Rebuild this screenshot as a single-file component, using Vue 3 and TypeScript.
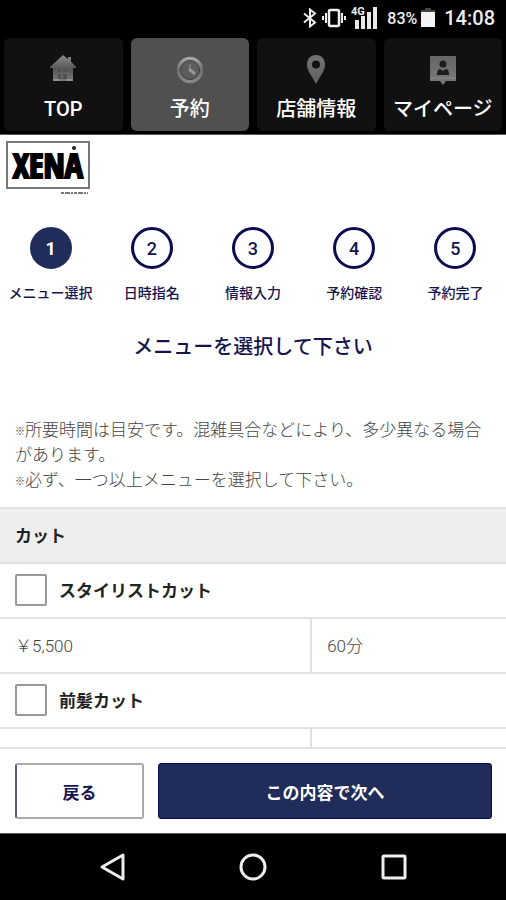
<script setup lang="ts">
import { ref } from 'vue'

interface NavItem {
  id: string
  label: string
}

interface MenuItem {
  id: string
  name: string
  price: string
  duration: string
}

const navItems: NavItem[] = [
  { id: 'top', label: 'TOP' },
  { id: 'reserve', label: '予約' },
  { id: 'shop', label: '店舗情報' },
  { id: 'mypage', label: 'マイページ' },
]
const activeNav = ref('reserve')

const steps: string[] = ['メニュー選択', '日時指名', '情報入力', '予約確認', '予約完了']
const currentStep = ref(1)

const menus: MenuItem[] = [
  { id: 'stylist', name: 'スタイリストカット', price: '￥5,500', duration: '60分' },
  { id: 'bangs', name: '前髪カット', price: '', duration: '' },
]
const selected = ref<string[]>([])
</script>

<template>
  <div class="screen">
    <div class="status-bar">
      <svg class="bluetooth" viewBox="0 0 14 20" width="14" height="20" aria-hidden="true">
        <path d="M1 5.5 L12 14.5 L7 18.5 V1.5 L12 5.5 L1 14.5" fill="none" stroke="#eee" stroke-width="2" />
      </svg>
      <svg class="vibrate" viewBox="0 0 24 20" width="24" height="20" aria-hidden="true">
        <rect x="7" y="2" width="10" height="16" rx="1.5" fill="none" stroke="#eee" stroke-width="2.5" />
        <path d="M4 5 V15 M20 5 V15 M1 8 V12 M23 8 V12" stroke="#eee" stroke-width="2" />
      </svg>
      <svg class="signal" viewBox="0 0 27 26" width="27" height="26" aria-hidden="true">
        <path d="M4 15h4v9h-4z M10 11h4v13h-4z M16 7h4v17h-4z M22 2h4v22h-4z" fill="#e8e8e8" />
        <text x="0" y="10" class="signal-text">4G</text>
      </svg>
      <span class="battery-level">83%</span>
      <svg class="battery" viewBox="0 0 14 20" width="14" height="20" aria-hidden="true">
        <path d="M4 0h6v2h4v3H0V2h4z" fill="#444" />
        <path d="M0 4h14v15H0z" fill="#f4f4f4" />
      </svg>
      <time class="clock">14:08</time>
    </div>

    <nav class="site-nav">
      <a
        v-for="item in navItems"
        :key="item.id"
        :href="'#' + item.id"
        class="nav-item"
        :class="{ active: item.id === activeNav }"
        @click.prevent="activeNav = item.id"
      >
        <svg v-if="item.id === 'top'" viewBox="0 0 30 30" width="30" height="30" aria-hidden="true">
          <defs>
            <linearGradient id="homeShade" x1="0" y1="0" x2="0" y2="1">
              <stop offset="0" stop-color="#888" />
              <stop offset=".55" stop-color="#565656" />
              <stop offset="1" stop-color="#777" />
            </linearGradient>
          </defs>
          <path d="M15 1 L20 5 V3 H23 V7.500 L28 13 V14 H25 V27 H5 V14 H2 V13 Z" fill="url(#homeShade)" />
          <path d="M10 14h3v4h-3z M15 14h4v4h-4z M10 20h3v5h-3z M15 20h4v5h-4z" fill="#505050" />
          <path d="M5 26h7M18 26h7" stroke="#999" stroke-width="1.500" />
        </svg>
        <svg v-else-if="item.id === 'reserve'" viewBox="0 0 30 30" width="30" height="30" aria-hidden="true">
          <defs>
            <linearGradient id="clockShade" x1="0" y1="0" x2="0" y2="1">
              <stop offset="0" stop-color="#a6a6a6" />
              <stop offset=".5" stop-color="#6c6c6c" />
              <stop offset="1" stop-color="#888" />
            </linearGradient>
          </defs>
          <circle cx="15" cy="16" r="11.500" fill="#5c5c5c" stroke="url(#clockShade)" stroke-width="3.500" />
          <circle cx="15" cy="16" r="9.500" fill="none" stroke="#414141" />
          <path d="M15 10V16" fill="none" stroke="#777" stroke-width="2" />
          <path d="M14 15L20 20" fill="none" stroke="#959595" stroke-width="3" />
        </svg>
        <svg v-else-if="item.id === 'shop'" viewBox="0 0 30 30" width="30" height="30" aria-hidden="true">
          <defs>
            <linearGradient id="pinShade" x1="0" y1="0" x2="0" y2="1">
              <stop offset="0" stop-color="#737373" />
              <stop offset="1" stop-color="#606060" />
            </linearGradient>
          </defs>
          <path
            d="M15 1C9.500 1 6 5 6 10.500C6 17 11 22 15 30C19 22 24 17 24 10.500C24 5 20.500 1 15 1ZM15 6.500A4 4 0 1 1 15 14.500A4 4 0 1 1 15 6.500Z"
            fill="url(#pinShade)"
            fill-rule="evenodd"
          />
        </svg>
        <svg v-else class="card-icon" viewBox="0 0 30 30" width="30" height="30" aria-hidden="true">
          <defs>
            <linearGradient id="cardShade" x1="0" y1="0" x2="0" y2="1">
              <stop offset="0" stop-color="#666" />
              <stop offset="1" stop-color="#787878" />
            </linearGradient>
          </defs>
          <path d="M2 2H28V27H18L15 31L12 27H2Z" fill="url(#cardShade)" />
          <path d="M2 24H28" stroke="#8a8a8a" />
          <circle cx="15" cy="10" r="3.500" fill="#1c1c1c" />
          <path d="M9 21Q9 15 12 15L15 17L18 15Q21 15 21 21Z" fill="#1c1c1c" />
        </svg>
        <span>{{ item.label }}</span>
      </a>
    </nav>

    <main class="page">
      <a class="logo" href="#top" aria-label="XENA">
        <svg viewBox="0 0 86 54" width="86" height="54" aria-hidden="true">
          <rect x="2" y="2" width="82" height="46" fill="#fff" stroke="#777" stroke-width="2" />
          <text x="43" y="38" text-anchor="middle" class="logo-text">XENA</text>
          <circle cx="69" cy="8" r="2" fill="#222" />
          <path d="M56 53H83" stroke="#777" stroke-width="2" stroke-dasharray="3 1 5 1 2 1" />
        </svg>
      </a>

      <ol class="steps">
        <li v-for="(step, i) in steps" :key="step" class="step" :class="{ current: i + 1 === currentStep }">
          <span class="step-number">{{ i + 1 }}</span>
          <span class="step-label">{{ step }}</span>
        </li>
      </ol>

      <h1 class="title">メニューを選択して下さい</h1>

      <div class="notes">
        <p><span class="mark">※</span>所要時間は目安です。混雑具合などにより、多少異なる場合があります。</p>
        <p><span class="mark">※</span>必ず、一つ以上メニューを選択して下さい。</p>
      </div>

      <table class="menu">
        <colgroup>
          <col class="price-col" />
          <col />
        </colgroup>
        <thead>
          <tr>
            <th colspan="2" scope="colgroup">カット</th>
          </tr>
        </thead>
        <tbody v-for="menu in menus" :key="menu.id">
          <tr>
            <td colspan="2">
              <label class="choice" :for="menu.id">
                <input :id="menu.id" v-model="selected" type="checkbox" :value="menu.id" />
                <span>{{ menu.name }}</span>
              </label>
            </td>
          </tr>
          <tr>
            <td>{{ menu.price }}</td>
            <td>{{ menu.duration }}</td>
          </tr>
        </tbody>
      </table>
    </main>

    <footer class="actions">
      <button type="button" class="back">戻る</button>
      <button type="button" class="next">この内容で次へ</button>
    </footer>

    <div class="system-nav">
      <button type="button" aria-label="戻る">
        <svg viewBox="0 0 30 30" width="30" height="30" aria-hidden="true">
          <path d="M26 3V27L5 15Z" fill="none" stroke="#eee" stroke-width="3" stroke-linejoin="round" />
        </svg>
      </button>
      <button type="button" aria-label="ホーム">
        <svg viewBox="0 0 30 30" width="30" height="30" aria-hidden="true">
          <circle cx="15" cy="15" r="12" fill="none" stroke="#eee" stroke-width="3" />
        </svg>
      </button>
      <button type="button" aria-label="履歴">
        <svg viewBox="0 0 30 30" width="30" height="30" aria-hidden="true">
          <rect x="4" y="4" width="22" height="22" rx="1" fill="none" stroke="#eee" stroke-width="3" />
        </svg>
      </button>
    </div>
  </div>
</template>

<style>
body {
  margin: 0;
}
</style>

<style scoped>
.screen {
  display: flex;
  flex-direction: column;
  height: 100vh;
  background: #fff;
  color: #444;
  font-family: Roboto, 'Noto Sans CJK JP', sans-serif;
  font-size: 17px;
}
.screen * {
  box-sizing: border-box;
}
.status-bar {
  display: flex;
  flex: none;
  align-items: center;
  justify-content: flex-end;
  height: 36px;
  padding-right: 11px;
  background: #000;
  color: #eee;
}
.bluetooth {
  margin-right: 5px;
}
.vibrate {
  margin-right: 5px;
}
.signal {
  margin-right: 9px;
}
.signal-text {
  fill: #eee;
  stroke: #000;
  stroke-width: 2px;
  paint-order: stroke;
  font-size: 11px;
  font-weight: 700;
}
.battery-level {
  margin-right: 4px;
  font-size: 16px;
  font-weight: 500;
}
.battery {
  margin-right: 9px;
}
.clock {
  font-size: 20px;
  font-weight: 500;
}
.site-nav {
  display: grid;
  flex: none;
  grid-template-columns: repeat(4, 1fr);
  gap: 8px;
  height: 99px;
  padding: 2px 4px 3px;
  border-bottom: 1px solid #555;
  background: #000;
}
.nav-item {
  display: flex;
  flex-direction: column;
  align-items: center;
  gap: 9px;
  padding-top: 16px;
  border-radius: 6px;
  background: #111;
  color: #fff;
  font-size: 20px;
  font-weight: 500;
  line-height: 32px;
  text-decoration: none;
  white-space: nowrap;
}
.nav-item svg {
  flex: none;
}
.card-icon {
  overflow: visible;
}
.nav-item.active {
  background: #505050;
}
.page {
  flex: 1;
  min-height: 0;
  overflow: hidden;
}
.logo {
  display: block;
  height: 54px;
  margin: 5px 0 0 5px;
}
.logo svg {
  display: block;
}
.logo-text {
  fill: #000;
  stroke: #000;
  stroke-width: 2px;
  font-family: 'Liberation Sans Narrow', 'Open Sans Condensed', 'Roboto Condensed', 'Liberation Sans', sans-serif;
  font-size: 34px;
  font-weight: 700;
}
.steps {
  display: grid;
  grid-template-columns: repeat(5, 1fr);
  margin: 33px 0 0;
  padding: 0;
  color: #14144f;
  list-style: none;
}
.step {
  display: flex;
  flex-direction: column;
  align-items: center;
  gap: 14px;
}
.step-number {
  display: flex;
  align-items: center;
  justify-content: center;
  width: 42px;
  height: 42px;
  border: 3px solid #0b0b50;
  border-radius: 50%;
  font-size: 18px;
  font-weight: 500;
}
.current .step-number {
  border-color: #202c5a;
  background: #202c5a;
  color: #fff;
  font-weight: 700;
}
.step-label {
  font-size: 14px;
  font-weight: 500;
  line-height: 20px;
  white-space: nowrap;
}
.title {
  margin: 29px 0 0;
  color: #14144f;
  font-size: 20px;
  font-weight: 500;
  line-height: 30px;
  text-align: center;
}
.notes {
  margin: 56px 15px 14px;
  font-weight: 300;
  line-height: 25px;
}
.notes p {
  margin: 0;
}
.mark {
  display: inline-block;
  width: 10px;
  font-size: 10px;
  line-height: 16px;
  vertical-align: 1px;
}
.menu {
  width: 100%;
  border-collapse: collapse;
  table-layout: fixed;
}
.price-col {
  width: 61.5%;
}
.menu th,
.menu td {
  height: 55px;
  padding: 0 15px 2px;
  border-top: 2px solid #e2e2e2;
  font-weight: 300;
  text-align: left;
}
.menu th {
  background: #eee;
  color: #222;
  font-weight: 700;
}
.menu td + td {
  border-left: 2px solid #e2e2e2;
}
.choice {
  display: flex;
  align-items: center;
  gap: 12px;
  color: #222;
  font-weight: 700;
}
.choice input {
  width: 32px;
  height: 32px;
  margin: 0;
  border: 2px solid #999;
  border-radius: 2px;
  background: #fff;
  appearance: none;
}
.choice input:checked {
  background: #202c5a;
}
.actions {
  display: flex;
  flex: none;
  gap: 14px;
  padding: 14px 14px 14px 15px;
  border-top: 2px solid #e2e2e2;
  background: #fff;
}
.actions button {
  height: 56px;
  padding: 0;
  border-radius: 3px;
  font: inherit;
  font-weight: 700;
}
.actions .back {
  flex: 0 0 27%;
  border: 2px solid #aaa;
  border-left-color: #5b5b86;
  background: #fff;
  color: #14144f;
}
.actions .next {
  flex: 1;
  border: 1px solid #0b0b50;
  background: #202c5a;
  color: #fff;
}
.system-nav {
  display: flex;
  flex: none;
  align-items: center;
  justify-content: center;
  gap: 111px;
  height: 67px;
  border-top: 1px solid #555;
  background: #000;
}
.system-nav button {
  width: 30px;
  height: 30px;
  padding: 0;
  border: 0;
  background: none;
}
.system-nav svg {
  display: block;
}
</style>
